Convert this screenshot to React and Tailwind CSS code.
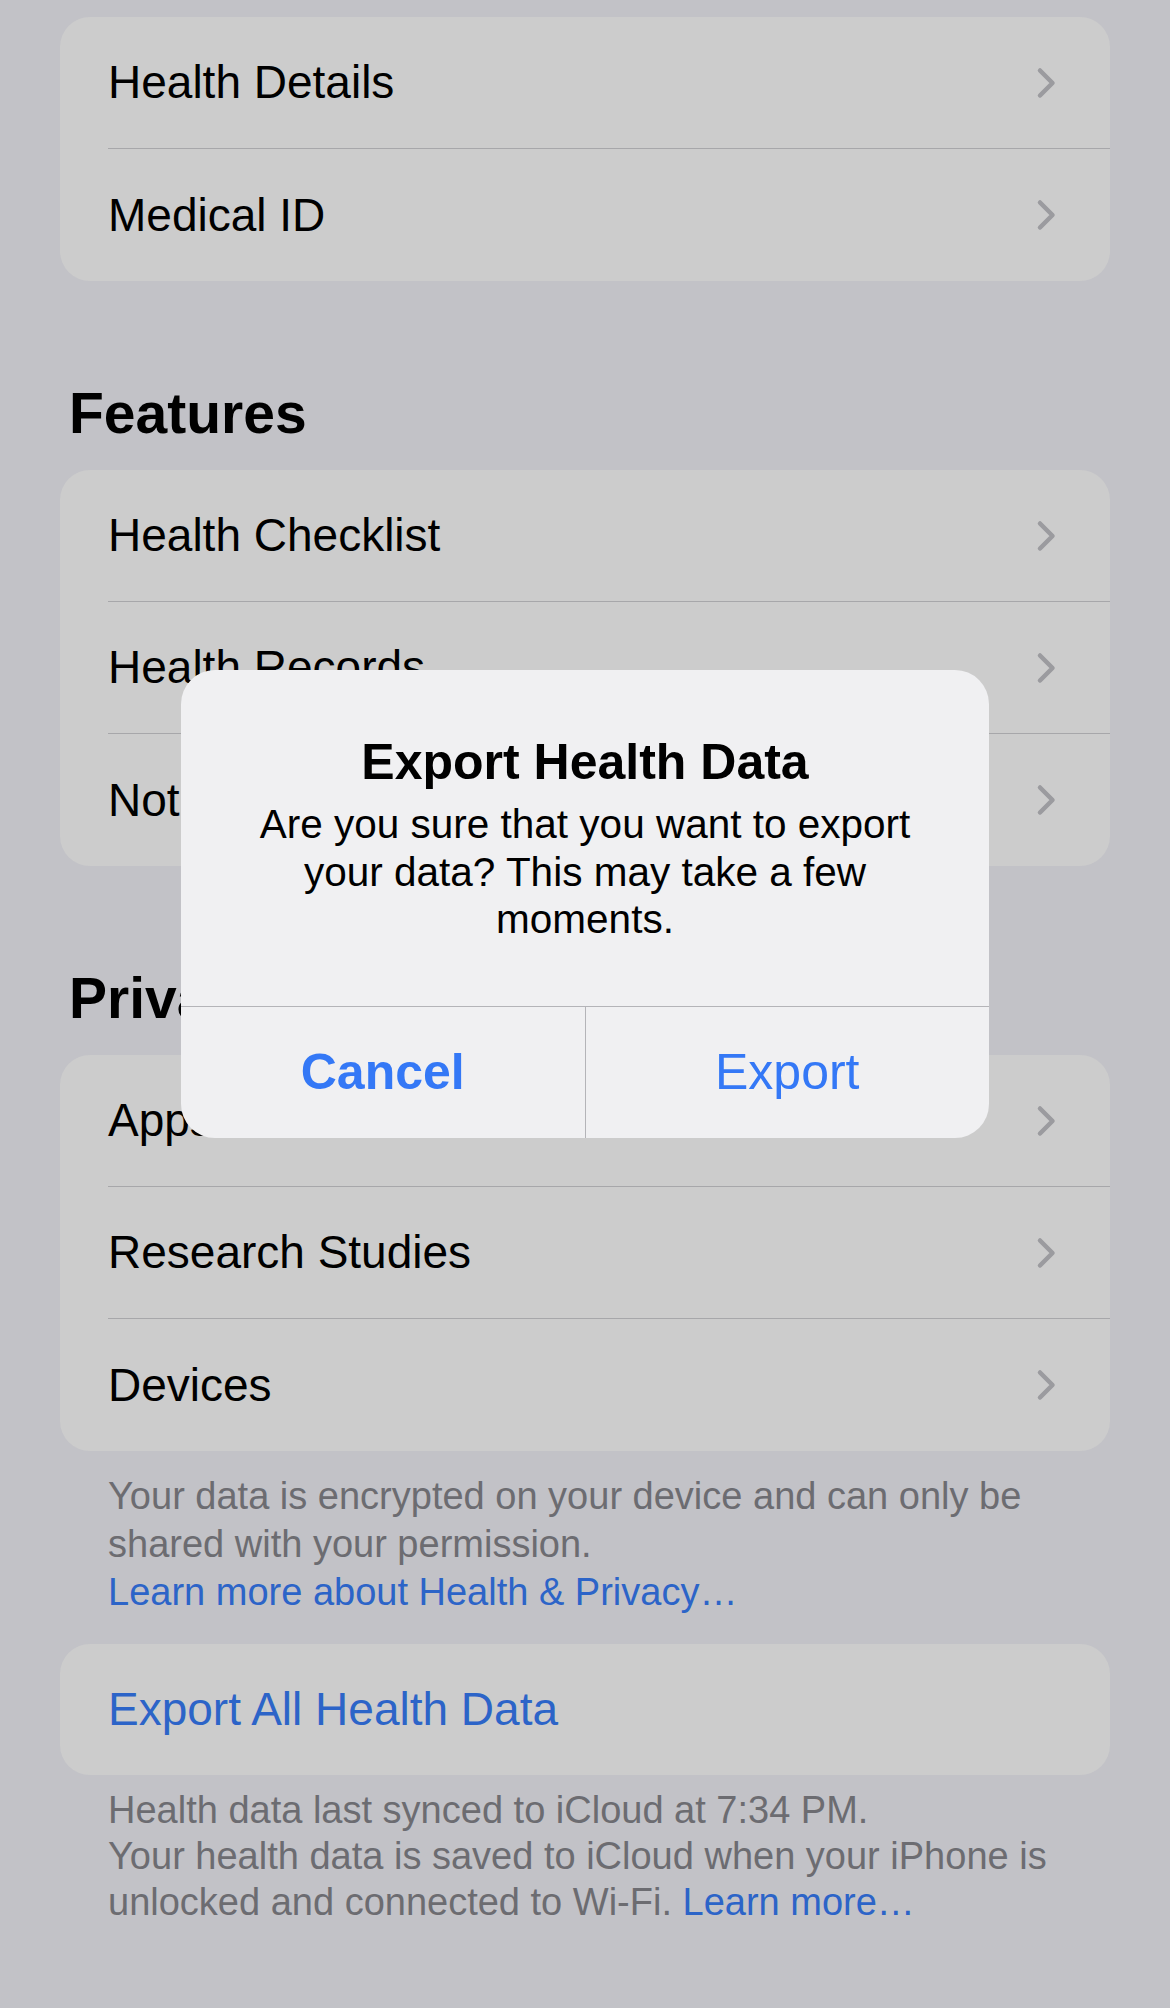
import React from 'react'

const font = { fontFamily: '"Liberation Sans", Arial, sans-serif' }

function Chevron() {
  return (
    <svg width="20" height="32" viewBox="0 0 20 32" fill="none" stroke="#9b9b9f" strokeWidth="4.5" strokeLinecap="round" strokeLinejoin="round">
      <path d="M4 3.5 L16.5 16 L4 28.5" />
    </svg>
  )
}

function Row({ label, last }) {
  return (
    <div className="h-[132px] pl-[48px] flex">
      <div className={last ? 'flex-1 flex items-center justify-between pr-[54px]' : 'flex-1 flex items-center justify-between pr-[54px] border-b border-[#a7a7aa]'}>
        <span className="text-[46px] text-black">{label}</span>
        <Chevron />
      </div>
    </div>
  )
}

function Card({ items }) {
  return (
    <div className="rounded-[30px] bg-[#cccccc] overflow-hidden">
      {items.map((it, i) => (
        <Row key={it} label={it} last={i === items.length - 1} />
      ))}
    </div>
  )
}

export default function App() {
  return (
    <div style={font} className="relative w-[1170px] min-h-[2008px] bg-[#c2c2c7] px-[60px] pt-[17px]">
      <Card items={['Health Details', 'Medical ID']} />

      <h2 className="mt-[104px] mb-[28px] pl-[9px] text-[57px] leading-none font-bold text-black">Features</h2>
      <Card items={['Health Checklist', 'Health Records', 'Notifications']} />

      <h2 className="mt-[104px] mb-[28px] pl-[9px] text-[57px] leading-none font-bold text-black">Privacy</h2>
      <Card items={['Apps', 'Research Studies', 'Devices']} />

      <div className="mt-[21px] pl-[48px] text-[38px] leading-[48px] text-[#6c6c71]">
        <div>Your data is encrypted on your device and can only be</div>
        <div>shared with your permission.</div>
        <div className="text-[#2c64c8]">Learn more about Health &amp; Privacy…</div>
      </div>

      <div className="mt-[28px] h-[131px] rounded-[30px] bg-[#cccccc] pl-[48px] flex items-center">
        <span className="text-[46px] text-[#2c64c8]">Export All Health Data</span>
      </div>

      <div className="mt-[12px] pl-[48px] text-[38px] leading-[46px] text-[#6c6c71]">
        <div>Health data last synced to iCloud at 7:34 PM.</div>
        <div>Your health data is saved to iCloud when your iPhone is</div>
        <div>
          unlocked and connected to Wi-Fi. <span className="text-[#2c64c8]">Learn more…</span>
        </div>
      </div>

      <div className="absolute left-[181px] top-[670px] w-[808px] h-[468px] rounded-[34px] bg-[#f0f0f2] flex flex-col overflow-hidden">
        <div className="flex-1 pt-[62px] px-[56px] text-center text-black">
          <div className="text-[50px] leading-[60px] font-bold">Export Health Data</div>
          <div className="mt-[9px] text-[40.5px] leading-[47.5px]">
            Are you sure that you want to export your data? This may take a few moments.
          </div>
        </div>
        <div className="h-[132px] border-t border-[#b4b4b8] flex">
          <button className="flex-1 flex items-center justify-center text-[50px] font-bold text-[#3478f6] border-r border-[#b4b4b8]">
            Cancel
          </button>
          <button className="flex-1 flex items-center justify-center text-[50px] text-[#3478f6]">
            Export
          </button>
        </div>
      </div>
    </div>
  )
}
